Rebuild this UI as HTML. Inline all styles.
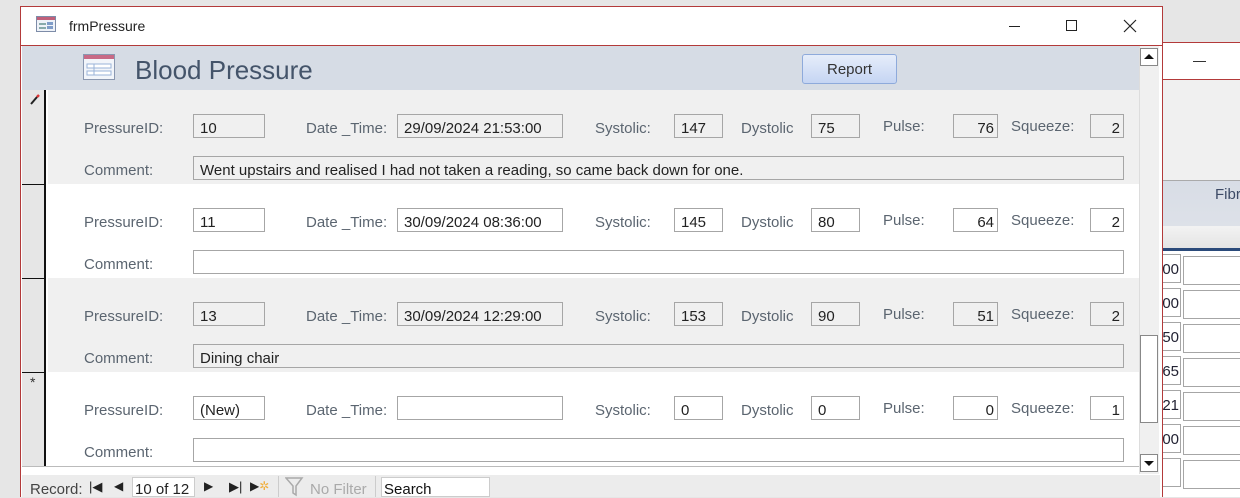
<!DOCTYPE html>
<html><head><meta charset="utf-8"><style>
*{box-sizing:border-box;margin:0;padding:0}
body{width:1240px;height:497px;overflow:hidden;background:#e6e6e6;position:relative;font-family:"Liberation Sans",sans-serif}
.a{position:absolute}
.lbl{position:absolute;color:#5b6570;font-size:15px;white-space:nowrap}
.rec .lbl{margin-top:2px}
.box{position:absolute;border:1px solid #a6a6a6;height:24px;font-size:15px;color:#222;padding:5px 0 0 6px;white-space:nowrap;overflow:hidden}
.r{text-align:right;padding-right:3px;padding-left:0}
.bc{position:absolute;left:1162px;width:19px;height:29px;border:1px solid #a6a6a6;border-left:none;background:#fff;font-size:15px;color:#223;text-align:right;padding:6px 1px 0 0;overflow:hidden}
.bb{position:absolute;left:1183px;width:60px;height:29px;border:1px solid #a6a6a6;background:#fff}
</style></head><body>
<!-- back window -->
<div class="a" style="left:1162px;top:42px;width:78px;height:455px;background:#f0f0f0;border-top:1px solid #b33a3a"></div>
<div class="a" style="left:1162px;top:43px;width:78px;height:37px;background:#fff;border-bottom:1px solid #b33a3a"></div>
<div class="a" style="left:1193px;top:61px;width:13px;height:1px;background:#333"></div>
<div class="a" style="left:1162px;top:180px;width:78px;height:46px;background:linear-gradient(#d8dde6,#dde1e8);border-top:1px solid #aaa"></div>
<div class="lbl" style="left:1215px;top:186px;color:#3d4a66;font-size:15px">Fibr</div>
<div class="a" style="left:1162px;top:226px;width:78px;height:22px;background:linear-gradient(#f3f3f3,#e4e4e4)"></div>
<div class="a" style="left:1162px;top:248px;width:78px;height:3px;background:#2b4a7a"></div>
<div class="a" style="left:1162px;top:251px;width:78px;height:246px;background:#fff"></div>
<div class="bc" style="top:254px">00</div><div class="bb" style="top:256px"></div>
<div class="bc" style="top:288px">00</div><div class="bb" style="top:290px"></div>
<div class="bc" style="top:322px">50</div><div class="bb" style="top:324px"></div>
<div class="bc" style="top:356px">65</div><div class="bb" style="top:358px"></div>
<div class="bc" style="top:390px">21</div><div class="bb" style="top:392px"></div>
<div class="bc" style="top:424px">00</div><div class="bb" style="top:426px"></div>
<div class="bc" style="top:458px"></div><div class="bb" style="top:460px"></div>
<!-- main window -->
<div class="a" style="left:20px;top:6px;width:1143px;height:491px;background:#fff;border:1px solid #b33a3a;border-bottom:none"></div>
<svg class="a" style="left:36px;top:16px" width="20" height="17"><rect x="0.5" y="0.5" width="19" height="15" fill="#eef2f8" stroke="#7d8ca8"/><rect x="1" y="1" width="18" height="3" fill="#c0607a"/><rect x="3" y="7" width="7" height="2" fill="#8aa"/><rect x="11" y="6" width="6" height="3" fill="#7f9cc8"/><rect x="3" y="11" width="7" height="2" fill="#8aa"/><rect x="11" y="10" width="6" height="3" fill="#7f9cc8"/></svg>
<div class="lbl" style="left:69px;top:18px;color:#222;font-size:14px">frmPressure</div>
<div class="a" style="left:1009px;top:26px;width:11px;height:1px;background:#222"></div>
<div class="a" style="left:1066px;top:20px;width:11px;height:11px;border:1px solid #222"></div>
<svg class="a" style="left:1123px;top:19px" width="14" height="14"><path d="M1 1L13 13M13 1L1 13" stroke="#222" stroke-width="1.2"/></svg>
<div class="a" style="left:21px;top:45px;width:1141px;height:1px;background:#b33a3a"></div>
<!-- header -->
<div class="a" style="left:22px;top:46px;width:1117px;height:44px;background:#d6dce5"></div>
<svg class="a" style="left:83px;top:54px" width="33" height="28"><rect x="0.5" y="0.5" width="31" height="25" fill="#f2f5fa" stroke="#8a97b0"/><rect x="1" y="1" width="30" height="4" fill="#c86a86"/><rect x="4" y="10" width="24" height="4" fill="#fff" stroke="#9ab3d8"/><rect x="4" y="17" width="24" height="4" fill="#fff" stroke="#9ab3d8"/><line x1="11" y1="10" x2="11" y2="21" stroke="#9ab3d8"/></svg>
<div class="lbl" style="left:135px;top:55px;font-size:26px;color:#44546a">Blood Pressure</div>
<div class="a" style="left:802px;top:54px;width:95px;height:30px;border:1px solid #8eaadb;border-radius:3px;background:linear-gradient(#e6edfa,#c5d5f3);font-size:15px;color:#333;text-align:center;line-height:29px">Report</div>
<!-- selector col -->
<div class="a" style="left:22px;top:90px;width:24px;height:376px;background:#e6e6e6;border-right:2px solid #111"></div>
<div class="a" style="left:22px;top:184px;width:24px;height:1px;background:#111"></div>
<div class="a" style="left:22px;top:278px;width:24px;height:1px;background:#111"></div>
<div class="a" style="left:22px;top:372px;width:24px;height:1px;background:#111"></div>
<svg class="a" style="left:29px;top:94px" width="12" height="12"><path d="M2 10L8 3" stroke="#222" stroke-width="2"/><path d="M8 3L10 1" stroke="#d33" stroke-width="2.5"/></svg>
<div class="lbl" style="left:30px;top:374px;font-size:14px;color:#333">*</div>
<!-- records -->
<div class="a" style="left:48px;top:90px;width:1091px;height:94px;background:#f0f0f0"></div>
<div class="a" style="left:48px;top:184px;width:1091px;height:94px;background:#fff"></div>
<div class="a" style="left:48px;top:278px;width:1091px;height:94px;background:#f0f0f0"></div>
<div class="a" style="left:48px;top:372px;width:1091px;height:94px;background:#fff"></div>
<div class="rec">
<div class="lbl" style="left:84px;top:118px">PressureID:</div><div class="box" style="left:193px;top:114px;width:72px">10</div>
<div class="lbl" style="left:306px;top:118px">Date _Time:</div><div class="box" style="left:397px;top:114px;width:166px">29/09/2024 21:53:00</div>
<div class="lbl" style="left:595px;top:118px">Systolic:</div><div class="box" style="left:674px;top:114px;width:49px">147</div>
<div class="lbl" style="left:741px;top:118px">Dystolic</div><div class="box" style="left:811px;top:114px;width:49px">75</div>
<div class="lbl" style="left:883px;top:116px">Pulse:</div><div class="box r" style="left:953px;top:114px;width:45px">76</div>
<div class="lbl" style="left:1011px;top:116px">Squeeze:</div><div class="box r" style="left:1090px;top:114px;width:34px">2</div>
<div class="lbl" style="left:84px;top:160px">Comment:</div><div class="box" style="left:193px;top:156px;width:931px">Went upstairs and realised I had not taken a reading, so came back down for one.</div>

<div class="lbl" style="left:84px;top:212px">PressureID:</div><div class="box" style="left:193px;top:208px;width:72px">11</div>
<div class="lbl" style="left:306px;top:212px">Date _Time:</div><div class="box" style="left:397px;top:208px;width:166px">30/09/2024 08:36:00</div>
<div class="lbl" style="left:595px;top:212px">Systolic:</div><div class="box" style="left:674px;top:208px;width:49px">145</div>
<div class="lbl" style="left:741px;top:212px">Dystolic</div><div class="box" style="left:811px;top:208px;width:49px">80</div>
<div class="lbl" style="left:883px;top:210px">Pulse:</div><div class="box r" style="left:953px;top:208px;width:45px">64</div>
<div class="lbl" style="left:1011px;top:210px">Squeeze:</div><div class="box r" style="left:1090px;top:208px;width:34px">2</div>
<div class="lbl" style="left:84px;top:254px">Comment:</div><div class="box" style="left:193px;top:250px;width:931px"></div>

<div class="lbl" style="left:84px;top:306px">PressureID:</div><div class="box" style="left:193px;top:302px;width:72px">13</div>
<div class="lbl" style="left:306px;top:306px">Date _Time:</div><div class="box" style="left:397px;top:302px;width:166px">30/09/2024 12:29:00</div>
<div class="lbl" style="left:595px;top:306px">Systolic:</div><div class="box" style="left:674px;top:302px;width:49px">153</div>
<div class="lbl" style="left:741px;top:306px">Dystolic</div><div class="box" style="left:811px;top:302px;width:49px">90</div>
<div class="lbl" style="left:883px;top:304px">Pulse:</div><div class="box r" style="left:953px;top:302px;width:45px">51</div>
<div class="lbl" style="left:1011px;top:304px">Squeeze:</div><div class="box r" style="left:1090px;top:302px;width:34px">2</div>
<div class="lbl" style="left:84px;top:348px">Comment:</div><div class="box" style="left:193px;top:344px;width:931px">Dining chair</div>

<div class="lbl" style="left:84px;top:400px">PressureID:</div><div class="box" style="left:193px;top:396px;width:72px">(New)</div>
<div class="lbl" style="left:306px;top:400px">Date _Time:</div><div class="box" style="left:397px;top:396px;width:166px"></div>
<div class="lbl" style="left:595px;top:400px">Systolic:</div><div class="box" style="left:674px;top:396px;width:49px">0</div>
<div class="lbl" style="left:741px;top:400px">Dystolic</div><div class="box" style="left:811px;top:396px;width:49px">0</div>
<div class="lbl" style="left:883px;top:398px">Pulse:</div><div class="box r" style="left:953px;top:396px;width:45px">0</div>
<div class="lbl" style="left:1011px;top:398px">Squeeze:</div><div class="box r" style="left:1090px;top:396px;width:34px">1</div>
<div class="lbl" style="left:84px;top:442px">Comment:</div><div class="box" style="left:193px;top:438px;width:931px"></div>
</div>
<!-- scrollbar -->
<div class="a" style="left:1139px;top:46px;width:20px;height:428px;background:#f0f0f0;border-left:1px solid #ddd"></div>
<div class="a" style="left:1140px;top:48px;width:18px;height:18px;border:1px solid #888;background:#fff"></div>
<div class="a" style="left:1144px;top:54px;width:0;height:0;border-left:5px solid transparent;border-right:5px solid transparent;border-bottom:5px solid #111"></div>
<div class="a" style="left:1140px;top:335px;width:18px;height:88px;border:1px solid #888;background:#fff"></div>
<div class="a" style="left:1140px;top:454px;width:18px;height:18px;border:1px solid #888;background:#fff"></div>
<div class="a" style="left:1144px;top:461px;width:0;height:0;border-left:5px solid transparent;border-right:5px solid transparent;border-top:5px solid #111"></div>
<!-- nav bar -->
<div class="a" style="left:22px;top:466px;width:1117px;height:9px;background:#fff;border-top:1px solid #bbb"></div>
<div class="a" style="left:22px;top:475px;width:1138px;height:22px;background:#ececec"></div>
<div class="lbl" style="left:30px;top:481px;color:#444">Record:</div>
<div class="lbl" style="left:89px;top:479px;color:#222;font-size:13px">|◀</div>
<div class="lbl" style="left:114px;top:479px;color:#222;font-size:12px">◀</div>
<div class="a" style="left:132px;top:477px;width:63px;height:20px;background:#fff;border:1px solid #ccc"></div>
<div class="lbl" style="left:135px;top:481px;color:#222">10 of 12</div>
<div class="lbl" style="left:204px;top:479px;color:#222;font-size:12px">▶</div>
<div class="lbl" style="left:229px;top:479px;color:#222;font-size:13px">▶|</div>
<div class="lbl" style="left:250px;top:479px;color:#222;font-size:12px">▶<span style="color:#f0b040">✲</span></div>
<div class="a" style="left:278px;top:476px;width:1px;height:21px;background:#ccc"></div>
<svg class="a" style="left:285px;top:477px" width="22" height="20"><path d="M1 1H17L11 9V18L8 16V9Z" fill="none" stroke="#aaa" stroke-width="1.5"/></svg>
<div class="lbl" style="left:310px;top:481px;color:#aaa">No Filter</div>
<div class="a" style="left:375px;top:476px;width:1px;height:21px;background:#ccc"></div>
<div class="a" style="left:381px;top:477px;width:109px;height:20px;background:#fff;border:1px solid #ccc"></div>
<div class="lbl" style="left:384px;top:481px;color:#111">Search</div>
</body></html>
